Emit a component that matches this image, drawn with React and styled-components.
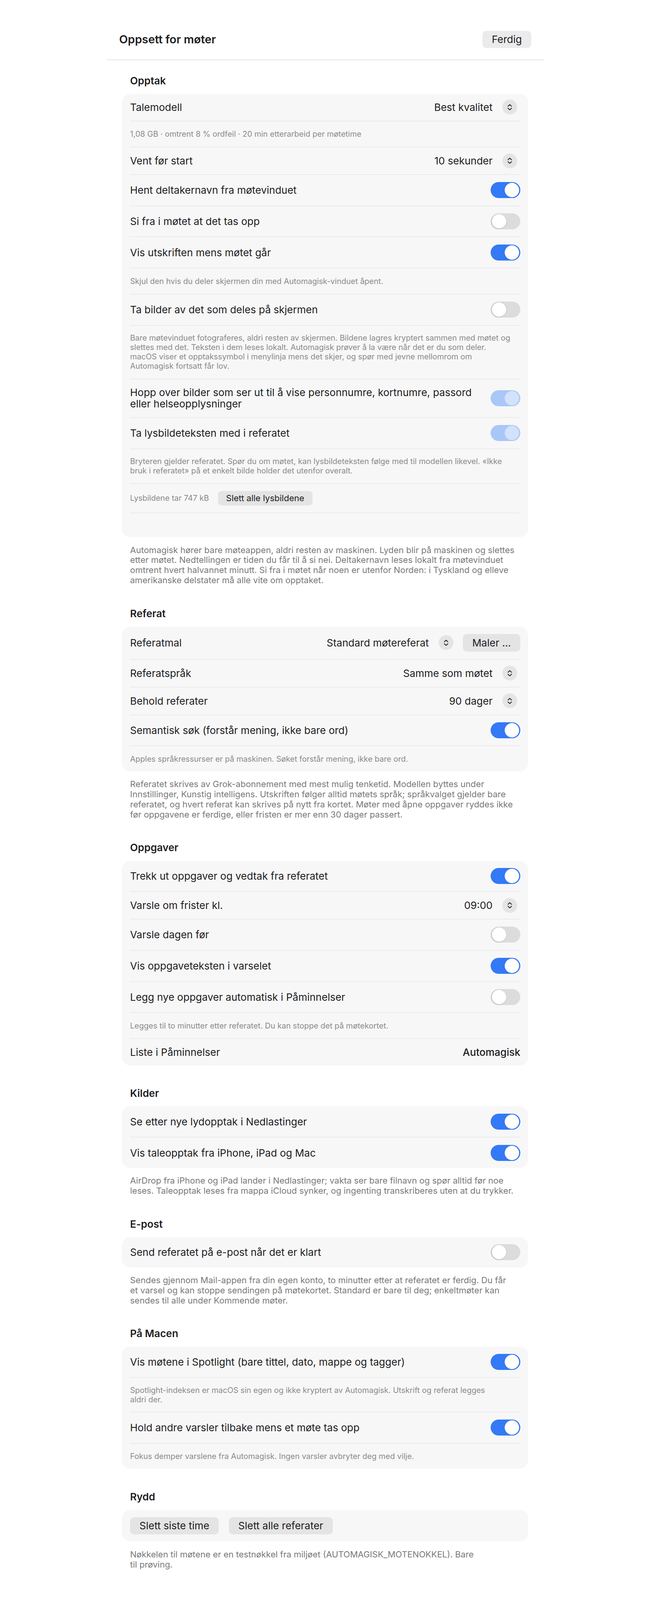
import React from "react";
import styled, { createGlobalStyle, css } from "styled-components";

/* Vertical rhythm: the page is photographed in a frame of about 4090px
   height, so vertical measures are scaled to keep all content in view. */
const V = 0.925;
const v = (n) => `${Math.round(n * V * 10) / 10}px`;

const GlobalStyle = createGlobalStyle`
  html, body { margin: 0; padding: 0; background: #ffffff; }
  body {
    font-family: Inter, "Noto Sans", "Liberation Sans", sans-serif;
    color: #1d1d1f;
    -webkit-font-smoothing: antialiased;
  }
  * { box-sizing: border-box; }
`;

const Sheet = styled.div`
  width: 1120px;
  margin: 0 auto;
`;

const Header = styled.header`
  display: flex;
  align-items: center;
  justify-content: space-between;
  padding: ${v(85)} 32px ${v(31)} 33px;
  border-bottom: 2px solid #e7e7e7;
`;

const Title = styled.h1`
  margin: 0;
  font-size: 29px;
  line-height: ${v(35)};
  font-weight: 600;
  color: #1d1d1f;
`;

const PillButton = styled.button`
  border: none;
  font-family: inherit;
  color: #1d1d1f;
  background: ${(p) => (p.$onWhite ? "#ebebeb" : "#e4e4e4")};
  white-space: nowrap;
  flex: none;
  ${(p) =>
    p.$small
      ? css`
          height: ${v(40)};
          padding: 0 21px;
          font-size: 22px;
          border-radius: 9px;
          margin: -1px 0;
        `
      : css`
          height: ${v(48)};
          padding: 0 24px;
          font-size: 26px;
          border-radius: 10px;
        `}
`;

const Content = styled.main`
  display: flex;
  flex-direction: column;
  gap: ${v(62)};
  padding: ${v(42)} 40px 40px;
`;

const Section = styled.section`
  display: flex;
  flex-direction: column;
`;

const SectionTitle = styled.h2`
  margin: 0 21px ${v(20)};
  font-size: 26px;
  line-height: ${v(31)};
  font-weight: 600;
  color: #1d1d1f;
`;

const Card = styled.div`
  background: #f7f7f7;
  border-radius: 22px;
  padding: 0 20px;
  & > * + * {
    border-top: 2px solid #ebebeb;
  }
`;

const Row = styled.div`
  display: flex;
  align-items: center;
  gap: ${(p) => (p.$gap ? p.$gap : 24)}px;
  padding: ${v(21)} 0 ${v(21)} 1px;
`;

const Label = styled.div`
  flex: 1;
  font-size: 26px;
  line-height: ${v(31.5)};
  color: #1d1d1f;
`;

const Value = styled.div`
  font-size: 26px;
  line-height: ${v(31.5)};
  color: #1d1d1f;
  font-weight: ${(p) => (p.$strong ? 500 : 400)};
  white-space: nowrap;
`;

const StepperButton = styled.div`
  flex: none;
  width: 38px;
  height: 38px;
  margin: -4px ${(p) => (p.$trail ? 8 : 0)}px -4px 1px;
  border-radius: 50%;
  background: #e4e4e4;
  display: flex;
  align-items: center;
  justify-content: center;
`;

const ToggleTrack = styled.div`
  position: relative;
  flex: none;
  width: 76px;
  height: 41px;
  margin: -1px 0;
  border-radius: 21px;
  background: ${(p) =>
    p.$on ? (p.$dim ? "#a9c7f7" : "#3479f5") : "#dcdcdc"};
`;

const ToggleKnob = styled.span`
  position: absolute;
  top: 2px;
  left: ${(p) => (p.$on ? 36 : 3)}px;
  width: 37px;
  height: 37px;
  border-radius: 50%;
  background: ${(p) => (p.$dim ? "#d2e2fb" : "#ffffff")};
  box-shadow: ${(p) =>
    p.$dim
      ? "none"
      : p.$on
      ? "0 0 0 1px rgba(30, 90, 220, 0.35)"
      : "0 0 0 1px rgba(0,0,0,0.07), -1px 1px 3px rgba(0,0,0,0.16)"};
`;

const Note = styled.div`
  display: flex;
  flex-direction: column;
  justify-content: center;
  min-height: ${v(72)};
  padding: ${v(21)} 0 ${v(21)} 1px;
  font-size: 20px;
  line-height: ${v(26)};
  color: #8a8a8a;
`;

const NoteInline = styled.span`
  font-size: 20px;
  line-height: ${v(26)};
  color: #8a8a8a;
  white-space: nowrap;
`;

const Line = styled.span`
  display: block;
  white-space: nowrap;
`;

const EmptyRow = styled.div`
  height: ${v(68)};
`;

const ButtonRow = styled.div`
  display: flex;
  gap: 26px;
  padding: ${v(20)} 0 ${v(20)} 1px;
`;

const Footer = styled.p`
  margin: ${v(22)} 21px 0;
  font-size: 22px;
  line-height: ${v(28)};
  color: #7a7a7a;
`;

function Lines({ lines }) {
  return lines.map((l, i) => <Line key={i}>{l}</Line>);
}

function Toggle({ on, dim }) {
  return (
    <ToggleTrack $on={on} $dim={dim}>
      <ToggleKnob $on={on} $dim={dim} />
    </ToggleTrack>
  );
}

function Stepper({ trail = true }) {
  return (
    <StepperButton $trail={trail}>
      <svg width="16" height="21" viewBox="0 0 16 21" fill="none">
        <path
          d="M3.5 8 L8 3.8 L12.5 8"
          stroke="#2a2a2a"
          strokeWidth="2.2"
          strokeLinecap="round"
          strokeLinejoin="round"
        />
        <path
          d="M3.5 13 L8 17.2 L12.5 13"
          stroke="#2a2a2a"
          strokeWidth="2.2"
          strokeLinecap="round"
          strokeLinejoin="round"
        />
      </svg>
    </StepperButton>
  );
}

function ToggleRow({ label, on, dim }) {
  return (
    <Row>
      <Label>{Array.isArray(label) ? <Lines lines={label} /> : label}</Label>
      <Toggle on={on} dim={dim} />
    </Row>
  );
}

function PickerRow({ label, value, children }) {
  return (
    <Row>
      <Label>{label}</Label>
      <Value>{value}</Value>
      {children ? (
        <>
          <Stepper trail={false} />
          {children}
        </>
      ) : (
        <Stepper />
      )}
    </Row>
  );
}

function NoteRow({ lines }) {
  return (
    <Note>
      <Lines lines={lines} />
    </Note>
  );
}

export default function App() {
  return (
    <>
      <GlobalStyle />
      <Sheet>
        <Header>
          <Title>Oppsett for møter</Title>
          <PillButton $onWhite>Ferdig</PillButton>
        </Header>

        <Content>
          <Section>
            <SectionTitle>Opptak</SectionTitle>
            <Card>
              <PickerRow label="Talemodell" value="Best kvalitet" />
              <NoteRow
                lines={[
                  "1,08 GB · omtrent 8 % ordfeil · 20 min etterarbeid per møtetime",
                ]}
              />
              <PickerRow label="Vent før start" value="10 sekunder" />
              <ToggleRow label="Hent deltakernavn fra møtevinduet" on />
              <ToggleRow label="Si fra i møtet at det tas opp" />
              <ToggleRow label="Vis utskriften mens møtet går" on />
              <NoteRow
                lines={[
                  "Skjul den hvis du deler skjermen din med Automagisk-vinduet åpent.",
                ]}
              />
              <ToggleRow label="Ta bilder av det som deles på skjermen" />
              <NoteRow
                lines={[
                  "Bare møtevinduet fotograferes, aldri resten av skjermen. Bildene lagres kryptert sammen med møtet og",
                  "slettes med det. Teksten i dem leses lokalt. Automagisk prøver å la være når det er du som deler.",
                  "macOS viser et opptakssymbol i menylinja mens det skjer, og spør med jevne mellomrom om",
                  "Automagisk fortsatt får lov.",
                ]}
              />
              <ToggleRow
                label={[
                  "Hopp over bilder som ser ut til å vise personnumre, kortnumre, passord",
                  "eller helseopplysninger",
                ]}
                on
                dim
              />
              <ToggleRow label="Ta lysbildeteksten med i referatet" on dim />
              <NoteRow
                lines={[
                  "Bryteren gjelder referatet. Spør du om møtet, kan lysbildeteksten følge med til modellen likevel. «Ikke",
                  "bruk i referatet» på et enkelt bilde holder det utenfor overalt.",
                ]}
              />
              <Row $gap={23}>
                <NoteInline>Lysbildene tar 747 kB</NoteInline>
                <PillButton $small>Slett alle lysbildene</PillButton>
              </Row>
              <EmptyRow />
            </Card>
            <Footer>
              <Lines
                lines={[
                  "Automagisk hører bare møteappen, aldri resten av maskinen. Lyden blir på maskinen og slettes",
                  "etter møtet. Nedtellingen er tiden du får til å si nei. Deltakernavn leses lokalt fra møtevinduet",
                  "omtrent hvert halvannet minutt. Si fra i møtet når noen er utenfor Norden: i Tyskland og elleve",
                  "amerikanske delstater må alle vite om opptaket.",
                ]}
              />
            </Footer>
          </Section>

          <Section>
            <SectionTitle>Referat</SectionTitle>
            <Card>
              <PickerRow label="Referatmal" value="Standard møtereferat">
                <PillButton>Maler ...</PillButton>
              </PickerRow>
              <PickerRow label="Referatspråk" value="Samme som møtet" />
              <PickerRow label="Behold referater" value="90 dager" />
              <ToggleRow label="Semantisk søk (forstår mening, ikke bare ord)" on />
              <NoteRow
                lines={[
                  "Apples språkressurser er på maskinen. Søket forstår mening, ikke bare ord.",
                ]}
              />
            </Card>
            <Footer>
              <Lines
                lines={[
                  "Referatet skrives av Grok-abonnement med mest mulig tenketid. Modellen byttes under",
                  "Innstillinger, Kunstig intelligens. Utskriften følger alltid møtets språk; språkvalget gjelder bare",
                  "referatet, og hvert referat kan skrives på nytt fra kortet. Møter med åpne oppgaver ryddes ikke",
                  "før oppgavene er ferdige, eller fristen er mer enn 30 dager passert.",
                ]}
              />
            </Footer>
          </Section>

          <Section>
            <SectionTitle>Oppgaver</SectionTitle>
            <Card>
              <ToggleRow label="Trekk ut oppgaver og vedtak fra referatet" on />
              <PickerRow label="Varsle om frister kl." value="09:00" />
              <ToggleRow label="Varsle dagen før" />
              <ToggleRow label="Vis oppgaveteksten i varselet" on />
              <ToggleRow label="Legg nye oppgaver automatisk i Påminnelser" />
              <NoteRow
                lines={[
                  "Legges til to minutter etter referatet. Du kan stoppe det på møtekortet.",
                ]}
              />
              <Row>
                <Label>Liste i Påminnelser</Label>
                <Value $strong>Automagisk</Value>
              </Row>
            </Card>
          </Section>

          <Section>
            <SectionTitle>Kilder</SectionTitle>
            <Card>
              <ToggleRow label="Se etter nye lydopptak i Nedlastinger" on />
              <ToggleRow label="Vis taleopptak fra iPhone, iPad og Mac" on />
            </Card>
            <Footer>
              <Lines
                lines={[
                  "AirDrop fra iPhone og iPad lander i Nedlastinger; vakta ser bare filnavn og spør alltid før noe",
                  "leses. Taleopptak leses fra mappa iCloud synker, og ingenting transkriberes uten at du trykker.",
                ]}
              />
            </Footer>
          </Section>

          <Section>
            <SectionTitle>E-post</SectionTitle>
            <Card>
              <ToggleRow label="Send referatet på e-post når det er klart" />
            </Card>
            <Footer>
              <Lines
                lines={[
                  "Sendes gjennom Mail-appen fra din egen konto, to minutter etter at referatet er ferdig. Du får",
                  "et varsel og kan stoppe sendingen på møtekortet. Standard er bare til deg; enkeltmøter kan",
                  "sendes til alle under Kommende møter.",
                ]}
              />
            </Footer>
          </Section>

          <Section>
            <SectionTitle>På Macen</SectionTitle>
            <Card>
              <ToggleRow label="Vis møtene i Spotlight (bare tittel, dato, mappe og tagger)" on />
              <NoteRow
                lines={[
                  "Spotlight-indeksen er macOS sin egen og ikke kryptert av Automagisk. Utskrift og referat legges",
                  "aldri der.",
                ]}
              />
              <ToggleRow label="Hold andre varsler tilbake mens et møte tas opp" on />
              <NoteRow
                lines={[
                  "Fokus demper varslene fra Automagisk. Ingen varsler avbryter deg med vilje.",
                ]}
              />
            </Card>
          </Section>

          <Section>
            <SectionTitle>Rydd</SectionTitle>
            <Card>
              <ButtonRow>
                <PillButton>Slett siste time</PillButton>
                <PillButton>Slett alle referater</PillButton>
              </ButtonRow>
            </Card>
            <Footer>
              <Lines
                lines={[
                  "Nøkkelen til møtene er en testnøkkel fra miljøet (AUTOMAGISK_MOTENOKKEL). Bare",
                  "til prøving.",
                ]}
              />
            </Footer>
          </Section>
        </Content>
      </Sheet>
    </>
  );
}
